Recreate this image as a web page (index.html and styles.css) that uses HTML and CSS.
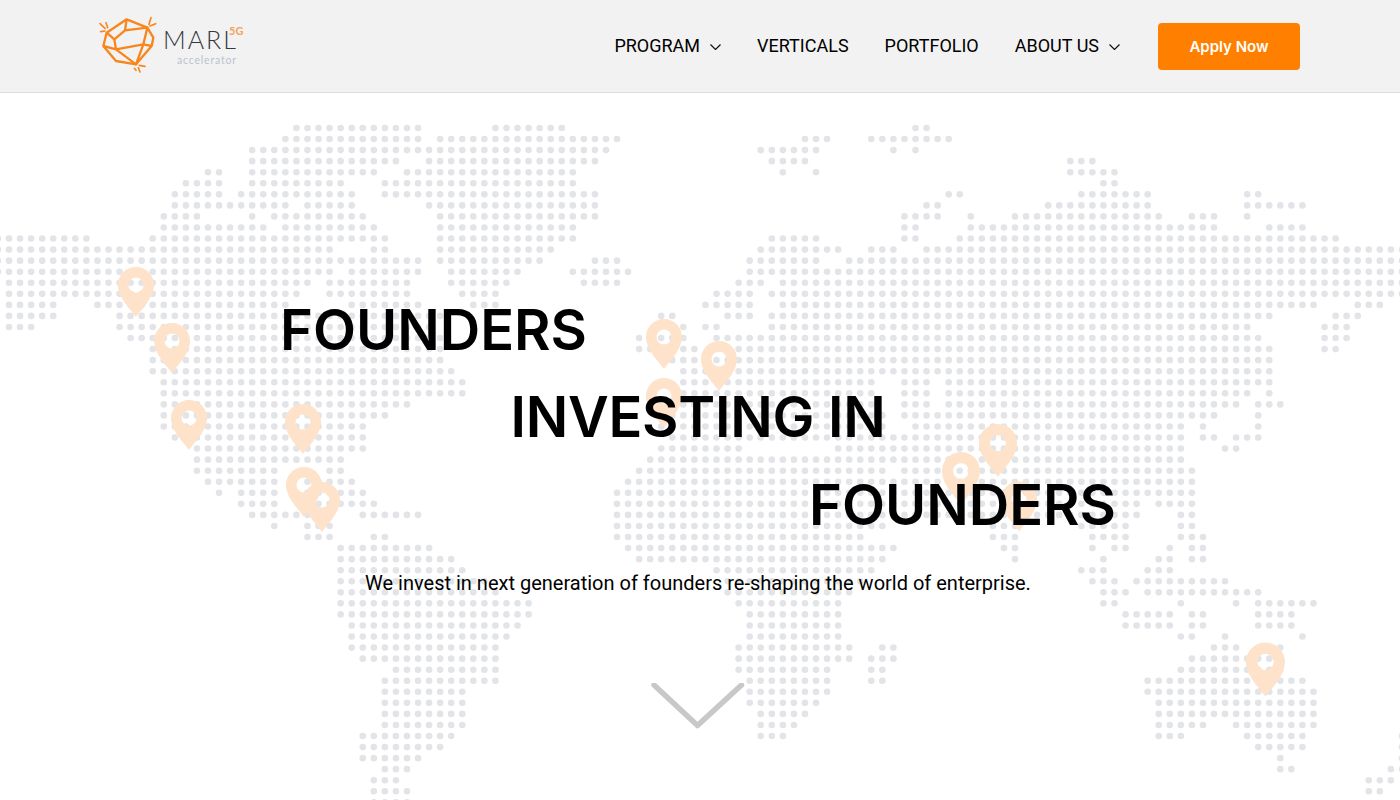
FILE: index.html
```html
<!DOCTYPE html>
<html lang="en">
<head>
<meta charset="utf-8">
<title>MARL 5G Accelerator</title>
<link rel="stylesheet" href="styles.css">
</head>
<body>
<header class="site-header">
  <a class="logo" href="#">
    <svg class="logo-mark" viewBox="15 20 195 195" aria-hidden="true">
      <g class="logo-lines">
        <path d="M110 45L172 70L190 100L185 125L138 180L78 170L40 125L50 85Z"/>
        <path d="M110 45L105 78L172 70L160 120L78 135L73 105L105 78M73 105L50 85M78 135L40 125M78 135L138 180L160 120L185 125"/>
      </g>
      <path class="logo-rays" d="M30 58L45 72M48 55L53 70M32 82L45 80M183 40L177 60M197 58L180 65M133 192L138 198M145 190L150 203M148 183L165 186"/>
    </svg>
    <span class="logo-text">
      <span class="logo-name">MARL<span class="logo-badge">5G</span></span>
      <span class="logo-sub">accelerator</span>
    </span>
  </a>
  <nav class="main-nav">
    <a class="nav-link" href="#">PROGRAM<svg class="caret" viewBox="0 0 11 6"><path d="M.5.5L5.5 5.5L10.5.5"/></svg></a>
    <a class="nav-link" href="#">VERTICALS</a>
    <a class="nav-link" href="#">PORTFOLIO</a>
    <a class="nav-link" href="#">ABOUT US<svg class="caret" viewBox="0 0 11 6"><path d="M.5.5L5.5 5.5L10.5.5"/></svg></a>
  </nav>
  <a class="apply-btn" href="#">Apply Now</a>
</header>
<main class="hero">
  <svg class="world-map" viewBox="0 0 1400 707" aria-hidden="true">
    <defs>
      <symbol id="pin" viewBox="0 0 36 50">
        <path fill-rule="evenodd" d="M18 0C8 0 0 8 0 18C0 31 14 44 18 50C22 44 36 31 36 18C36 8 28 0 18 0ZM18 10.5a7.5 7.5 0 1 1 0 15a7.5 7.5 0 1 1 0-15Z"/>
      </symbol>
    </defs>
    <g transform="translate(9 35) scale(11.055)">
      <path class="dots" d="M26 0H37.1M44 0H50.1M82 0H83.1
M25 1H37.1M39 1H55.1M72 1H74.1M78 1H85.1
M22 2H54.1M68 2H73.1M80 2h.1M82 2h.1
M22 3H35.1M38 3H53.1M69 3H72.1M96 3H98.1
M18 4H19.1M22 4H33.1M36 4H51.1M70 4h.1M73 4h.1M96 4H100.1
M16 5H19.1M22 5H30.1M34 5H51.1M99 5H100.1
M15 6H19.1M21 6H31.1M34 6H53.1M85 6H86.1M97 6H103.1M112 6H113.1
M15 7H25.1M27 7H31.1M38 7H53.1M83 7H84.1M94 7H103.1M112 7H117.1
M14 8H17.1M22 8h.1M24 8H32.1M39 8H53.1M81 8H84.1M87 8h.1M91 8H104.1M107 8H109.1M112 8h.1
M14 9H23.1M25 9H33.1M39 9H51.1M81 9H82.1M87 9H109.1M114 9H117.1
M-1 10H7.1M13 10H34.1M39 10H51.1M69 10H73.1M81 10H82.1M86 10H120.1
M-1 11H29.1M33 11H34.1M39 11H49.1M68 11H75.1M78 11H80.1M83 11H126.1
M-1 12H37.1M39 12H48.1M53 12H55.1M67 12H73.1M76 12H126.1
M-1 13H29.1M31 13H37.1M40 13H46.1M51 13H56.1M67 13H126.1
M0 14H27.1M29 14H36.1M40 14H45.1M52 14H55.1M66 14H68.1M70 14H126.1
M0 15H26.1M29 15H36.1M41 15H44.1M64 15H67.1M69 15H126.1
M0 16H4.1M8 16H25.1M31 16H37.1M42 16H44.1M63 16H67.1M70 16H118.1M122 16H124.1
M0 17H4.1M10 17H39.1M59 17H60.1M65 17H67.1M69 17H114.1M120 17H122.1
M0 18H2.1M10 18H38.1M60 18H61.1M63 18H64.1M69 18H112.1M119 18H121.1
M11 19H39.1M57 19H61.1M64 19H113.1M119 19H121.1
M13 20H39.1M57 20H62.1M64 20H114.1M119 20H120.1
M13 21H39.1M60 21H114.1
M13 22H40.1M61 22H114.1
M14 23H41.1M61 23H78.1M81 23H83.1M85 23H114.1
M14 24H41.1M61 24H78.1M81 24H83.1M85 24H112.1M114 24h.1
M14 25H36.1M60 25H78.1M81 25H83.1M85 25H111.1M113 25H115.1
M14 26H34.1M60 26H79.1M81 26H109.1M113 26h.1
M14 27H32.1M59 27H79.1M82 27H106.1M108 27h.1M113 27h.1
M15 28H32.1M60 28H106.1M108 28H109.1M111 28H113.1
M17 29H32.1M59 29H66.1M75 29H106.1M110 29H111.1
M17 30H30.1M58 30H106.1
M17 31H24.1M29 31H30.1M57 31H79.1M81 31H107.1
M18 32H24.1M27 32H31.1M56 32H107.1
M19 33h.1M21 33H24.1M27 33H32.1M55 33H107.1
M21 34H24.1M27 34H33.1M55 34H102.1M104 34H107.1
M22 35H27.1M32 35H37.1M55 35H102.1M106 35H107.1
M24 36h.1M27 36H29.1M55 36H79.1M89 36H91.1M97 36H101.1M106 36H107.1
M27 37H29.1M33 37H34.1M55 37H77.1M89 37H91.1M98 37H101.1M106 37H108.1
M30 38H38.1M56 38H80.1M90 38H91.1M98 38h.1M100 38H101.1M105 38h.1M107 38H108.1
M30 39H40.1M57 39H79.1M91 39h.1M99 39h.1M104 39H105.1M107 39H108.1
M30 40H41.1M64 40H78.1M97 40H99.1M103 40H105.1
M30 41H43.1M65 41H77.1M98 41H100.1M102 41H110.1
M30 42H44.1M65 42H76.1M99 42H101.1M103 42H113.1
M30 43H47.1M66 43H75.1M99 43H100.1M106 43h.1M111 43h.1M113 43H118.1
M30 44H47.1M67 44H75.1M101 44H105.1M107 44H108.1M113 44H116.1
M31 45H46.1M67 45H75.1M101 45H105.1M107 45H108.1M113 45H116.1
M31 46H45.1M67 46H75.1M106 46H107.1M110 46h.1M117 46h.1
M31 47H44.1M66 47H76.1M79 47H80.1M109 47H111.1M115 47h.1
M32 48H44.1M66 48H76.1M78 48H80.1M107 48H114.1
M35 49H44.1M66 49H74.1M78 49H79.1M106 49H115.1
M34 50H44.1M67 50H74.1M78 50H79.1M103 50H117.1
M34 51H41.1M67 51H74.1M103 51H118.1
M34 52H41.1M67 52H73.1M104 52H118.1
M34 53H41.1M68 53H72.1M104 53H118.1
M34 54H41.1M68 54H71.1M104 54H108.1M111 54H118.1
M32 55H40.1M68 55H70.1M104 55H106.1M112 55H117.1M126 55h.1
M32 56H39.1M113 56H117.1M126 56h.1
M32 57H37.1M115 57h.1M126 57h.1
M34 58H36.1M115 58H116.1M125 58H126.1
M33 59H35.1M123 59H125.1
M33 60H36.1M123 60H124.1
M33 61H36.1"/>
    </g>
    <g class="pins">
      <use href="#pin" x="118" y="174" width="36" height="50"/>
      <use href="#pin" x="154" y="229" width="36" height="52"/>
      <use href="#pin" x="171" y="307" width="36" height="50"/>
      <use href="#pin" x="285" y="311" width="36" height="50"/>
      <use href="#pin" x="286" y="373" width="36" height="52"/>
      <use href="#pin" x="304" y="389" width="36" height="50"/>
      <use href="#pin" x="646" y="226" width="36" height="50"/>
      <use href="#pin" x="701" y="248" width="36" height="50"/>
      <use href="#pin" x="646" y="285" width="36" height="50"/>
      <use href="#pin" x="979" y="331" width="38" height="53"/>
      <use href="#pin" x="942" y="359" width="38" height="53"/>
      <use href="#pin" x="1001" y="387" width="36" height="53"/>
      <use href="#pin" x="1246" y="549" width="39" height="55"/>
    </g>
  </svg>
  <div class="hero-copy">
    <h1 class="headline">
      <span class="headline-left">FOUNDERS</span>
      <span class="headline-center">INVESTING IN</span>
      <span class="headline-right">FOUNDERS</span>
    </h1>
    <p class="tagline">We invest in next generation of founders re-shaping the world of enterprise.</p>
    <svg class="scroll-down" viewBox="0 0 94 46" aria-hidden="true"><path d="M3 2L46.5 42.5L90.5 2"/></svg>
  </div>
</main>
</body>
</html>
```
FILE: styles.css
```css
* { box-sizing: border-box; }
html, body { margin: 0; height: 800px; overflow: hidden; background: #fff; }
body { font-family: Roboto, "Liberation Sans", sans-serif; color: #000; }
a { color: inherit; text-decoration: none; }

.site-header {
  display: flex;
  align-items: center;
  height: 93px;
  padding: 0 100px;
  background: #f2f2f2;
  border-bottom: 1px solid #dedede;
}
.logo { display: flex; align-items: flex-start; height: 65px; margin-top: -5px; margin-left: -5px; }
.logo-mark { width: 65px; height: 65px; flex: none; }
.logo-lines { fill: none; stroke: #f7861e; stroke-width: 7; stroke-linejoin: round; }
.logo-rays { fill: none; stroke: #f7861e; stroke-width: 5; stroke-linecap: round; }
.logo-text { display: flex; flex-direction: column; margin-left: 3px; padding-top: 14px; font-family: Lato, sans-serif; }
.logo-name { position: relative; font-size: 25px; line-height: 29px; font-weight: 300; letter-spacing: 2px; color: #35383d; }
.logo-badge { position: absolute; left: 66px; top: 0; font-size: 11px; line-height: 12px; font-weight: 700; letter-spacing: 0; color: #f8a25c; }
.logo-sub { margin-left: 14px; font-size: 10.5px; line-height: 12px; letter-spacing: .8px; color: #bcc3cc; }

.main-nav { display: flex; align-items: center; gap: 36px; margin-left: auto; }
.nav-link { display: flex; align-items: center; font-size: 18px; line-height: 24px; color: #000; }
.caret { width: 11px; height: 6px; margin-left: 10px; margin-top: 1px; fill: none; stroke: #111; stroke-width: 1.2; }
.apply-btn {
  display: flex;
  align-items: center;
  justify-content: center;
  width: 142px;
  height: 47px;
  margin-left: 38px;
  border-radius: 4px;
  background: #ff7f00;
  color: #fff;
  font-family: Inter, sans-serif;
  font-size: 15px;
  font-weight: 600;
}

.hero { position: relative; height: 707px; overflow: hidden; background: #fff; }
.world-map { position: absolute; left: 0; top: 0; width: 1400px; height: 707px; }
.dots { fill: none; stroke: #e2e4e8; stroke-width: .6; stroke-linecap: round; stroke-dasharray: 0 1; }
.pins { fill: #fee2c9; }

.hero-copy { position: relative; display: flex; flex-direction: column; width: 836px; margin-left: 280px; padding-top: 193px; }
.headline { display: flex; flex-direction: column; margin: 0; font-family: Inter, sans-serif; font-size: 56px; line-height: 88.5px; font-weight: 600; letter-spacing: 0; color: #000; }
.headline-left { text-align: left; margin-bottom: -2px; }
.headline-center { text-align: center; letter-spacing: -.27px; }
.headline-right { text-align: right; }
.tagline { margin: 19px 0 0; text-align: center; font-size: 20px; line-height: 28px; color: #000; }
.scroll-down { align-self: center; width: 94px; height: 46px; margin-top: 86px; fill: none; stroke: #c8c8c8; stroke-width: 5.5; stroke-linecap: round; stroke-linejoin: round; }
```
